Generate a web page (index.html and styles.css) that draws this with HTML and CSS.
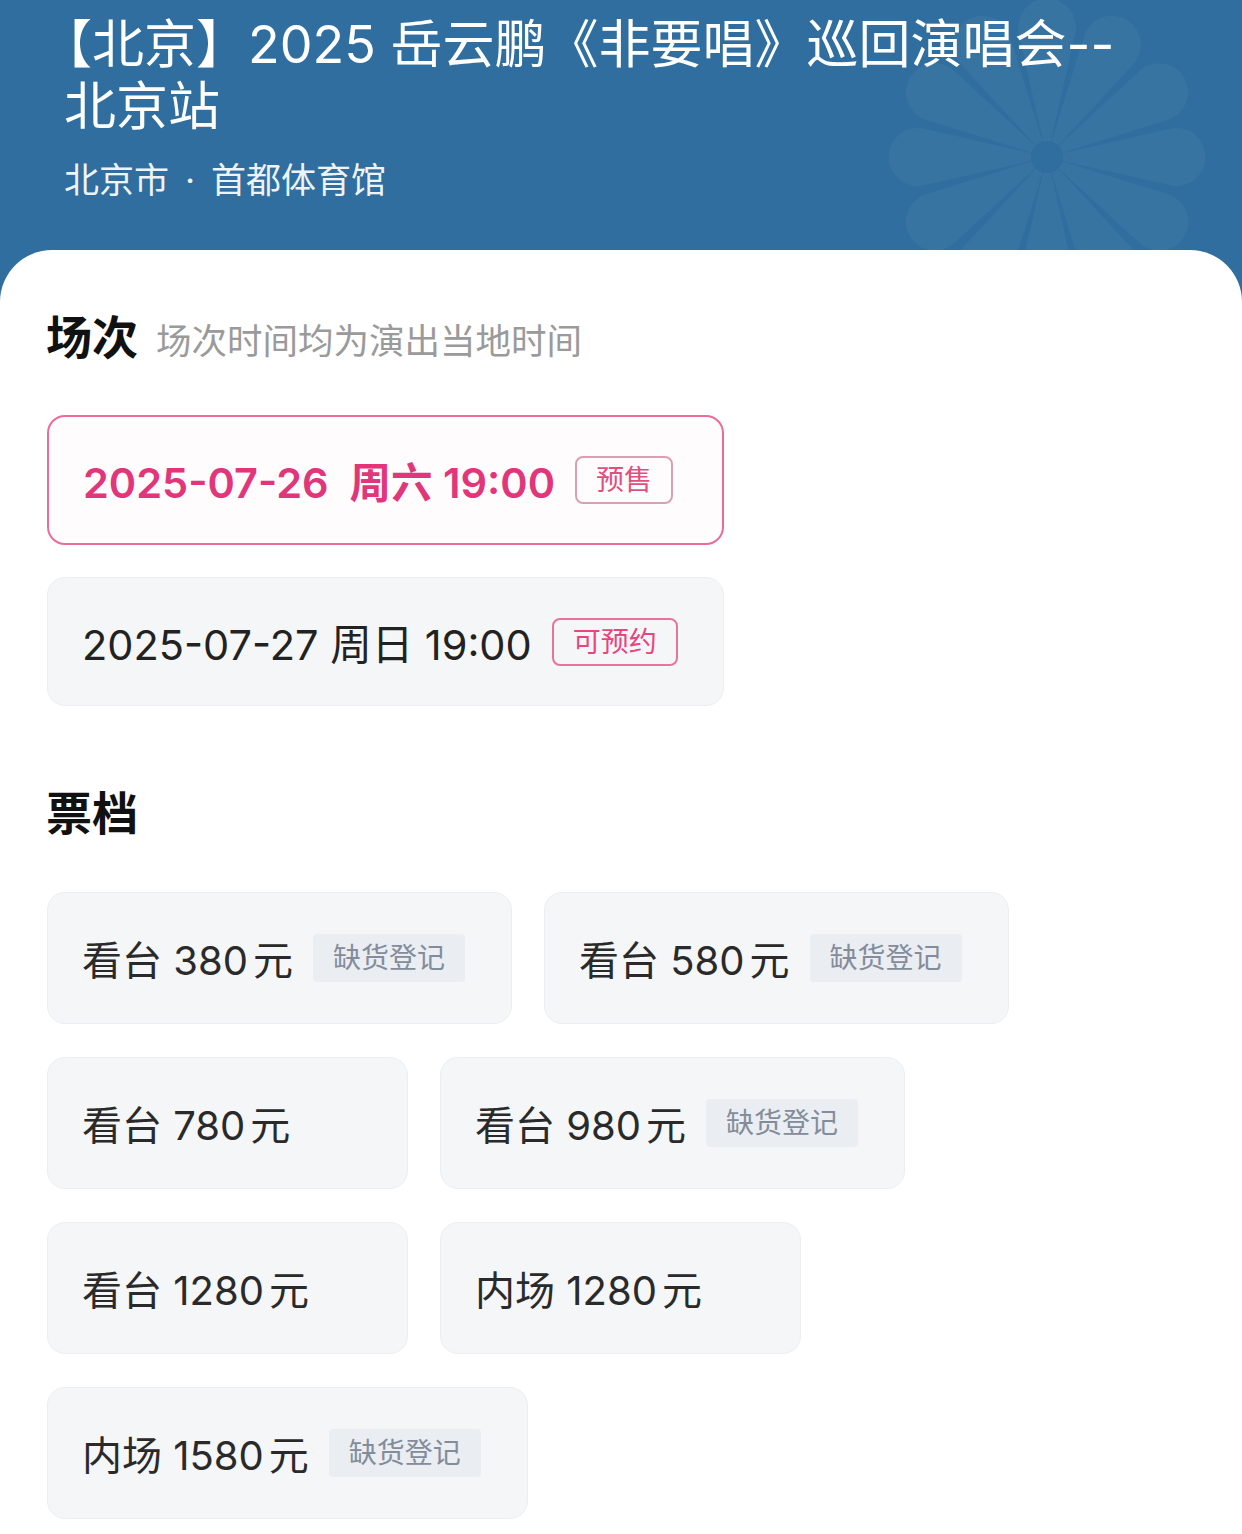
FILE: index.html
```html
<!DOCTYPE html>
<html lang="zh-CN">
<head>
<meta charset="utf-8">
<title>岳云鹏《非要唱》巡回演唱会--北京站</title>
<link rel="stylesheet" href="styles.css">
</head>
<body>
<div class="page">
  <header class="hero">
    <svg class="flower" viewBox="-160 -160 320 320" aria-hidden="true">
      <defs>
        <path id="petal" d="M -4 -16 L -28 -122 A 29 29 0 1 1 28 -122 L 4 -16 Z"/>
      </defs>
      <g fill="#ffffff" fill-opacity="0.042">
        <use href="#petal" transform="rotate(0)"/>
        <use href="#petal" transform="rotate(30)"/>
        <use href="#petal" transform="rotate(60)"/>
        <use href="#petal" transform="rotate(90)"/>
        <use href="#petal" transform="rotate(120)"/>
        <use href="#petal" transform="rotate(150)"/>
        <use href="#petal" transform="rotate(180)"/>
        <use href="#petal" transform="rotate(210)"/>
        <use href="#petal" transform="rotate(240)"/>
        <use href="#petal" transform="rotate(270)"/>
        <use href="#petal" transform="rotate(300)"/>
        <use href="#petal" transform="rotate(330)"/>
      </g>
    </svg>
    <h1 class="title">【北京】2025 岳云鹏《非要唱》巡回演唱会--北京站</h1>
    <p class="venue">北京市<span class="dot">·</span>首都体育馆</p>
  </header>

  <main class="sheet">
    <section class="block">
      <h2 class="block-head">场次<span class="block-note">场次时间均为演出当地时间</span></h2>
      <div class="sessions">
        <div class="session session-active">
          <span class="session-text">2025-07-26&nbsp; 周六 19:00</span>
          <span class="tag tag-outline tag-muted">预售</span>
        </div>
        <div class="session">
          <span class="session-text">2025-07-27 周日 19:00</span>
          <span class="tag tag-outline">可预约</span>
        </div>
      </div>
    </section>

    <section class="block block-tickets">
      <h2 class="block-head">票档</h2>
      <div class="prices">
        <div class="price"><span class="price-text">看台 380<span class="yuan">元</span></span><span class="tag tag-grey">缺货登记</span></div>
        <div class="price"><span class="price-text">看台 580<span class="yuan">元</span></span><span class="tag tag-grey">缺货登记</span></div>
        <div class="price"><span class="price-text">看台 780<span class="yuan">元</span></span></div>
        <div class="price"><span class="price-text">看台 980<span class="yuan">元</span></span><span class="tag tag-grey">缺货登记</span></div>
        <div class="price"><span class="price-text">看台 1280<span class="yuan">元</span></span></div>
        <div class="price"><span class="price-text">内场 1280<span class="yuan">元</span></span></div>
        <div class="price"><span class="price-text">内场 1580<span class="yuan">元</span></span><span class="tag tag-grey">缺货登记</span></div>
      </div>
    </section>
  </main>
</div>
</body>
</html>
```
FILE: styles.css
```css
* { box-sizing: border-box; }

html, body {
  margin: 0;
  padding: 0;
  background: #ffffff;
}

body {
  font-family: "Inter", "Noto Sans CJK SC", "Noto Sans", sans-serif;
  color: #222222;
}

.page {
  width: 1242px;
  background: #2f6e9e;
}

.hero {
  position: relative;
  height: 250px;
  padding: 14px 64px 0 64px;
  overflow: hidden;
  color: #ffffff;
}

.flower {
  position: absolute;
  left: 887px;
  top: -3px;
  width: 320px;
  height: 320px;
}

.title {
  position: relative;
  margin: 0;
  width: 1080px;
  font-size: 52px;
  line-height: 62px;
  font-weight: 400;
  text-indent: -24px;
}

.venue {
  position: relative;
  margin: 18px 0 0 0;
  font-size: 35px;
  line-height: 48px;
  color: #eef3f8;
}

.dot {
  padding: 0 16px;
}

.sheet {
  background: #ffffff;
  border-radius: 52px 52px 0 0;
  padding: 59px 47px 16px 47px;
}

.block-head {
  margin: 0 0 0 -1px;
  height: 56px;
  font-size: 46px;
  line-height: 56px;
  font-weight: 700;
  color: #111111;
  display: flex;
  align-items: baseline;
}

.block-note {
  margin-left: 18px;
  font-size: 35.5px;
  line-height: 1;
  font-weight: 400;
  color: #9a9a9a;
}

.sessions {
  margin-top: 50px;
  display: grid;
  grid-template-columns: max-content;
  row-gap: 32px;
}

.session {
  height: 129px;
  display: flex;
  align-items: center;
  padding: 0 45px 0 34px;
  background: #f5f6f8;
  border: 1px solid #eceef1;
  border-radius: 18px;
}

.session-text {
  font-size: 41.5px;
  color: #222222;
  white-space: pre;
}

.session-active {
  height: 130px;
  background: #fffcfd;
  border: 2px solid #ec6b9b;
}

.session-active .session-text {
  color: #e2367b;
  font-weight: 600;
}

.tag {
  margin-left: 20px;
  font-size: 28px;
  line-height: 44px;
  white-space: nowrap;
}

.tag-outline {
  padding: 0 19px;
  border: 2px solid #e9739c;
  border-radius: 8px;
  color: #e8447e;
}

.tag-muted {
  border-color: #d9a0b4;
  color: #e0507f;
}

.block-tickets {
  margin-top: 79px;
}

.prices {
  margin-top: 51px;
  display: flex;
  flex-wrap: wrap;
  gap: 33px 32px;
}

.price {
  height: 132px;
  min-width: 361px;
  display: flex;
  align-items: center;
  padding: 0 46px 0 34px;
  background: #f5f6f8;
  border: 1px solid #eceef1;
  border-radius: 18px;
}

.price-text {
  font-size: 40px;
  color: #2a2a2a;
  white-space: nowrap;
}

.yuan {
  margin-left: 5px;
}

.tag-grey {
  padding: 2px 20px;
  background: #eaedf1;
  border-radius: 4px;
  color: #838c9b;
}
```
